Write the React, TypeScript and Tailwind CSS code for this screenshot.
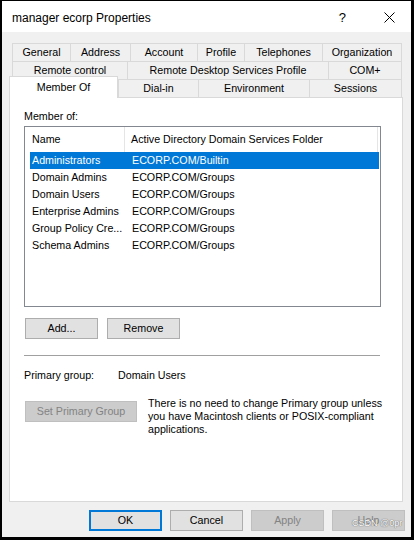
import React from "react";

const font = { fontFamily: '"Liberation Sans", Arial, sans-serif' };

const rowOne = [
  { label: "General", w: 58 },
  { label: "Address", w: 60 },
  { label: "Account", w: 67 },
  { label: "Profile", w: 47 },
  { label: "Telephones", w: 78 },
  { label: "Organization", w: 80 },
];
const rowTwo = [
  { label: "Remote control", w: 115 },
  { label: "Remote Desktop Services Profile", w: 201 },
  { label: "COM+", w: 74 },
];
const rowThree = [
  { label: "Dial-in", w: 80 },
  { label: "Environment", w: 111 },
  { label: "Sessions", w: 93 },
];

const groups = [
  ["Administrators", "ECORP.COM/Builtin"],
  ["Domain Admins", "ECORP.COM/Groups"],
  ["Domain Users", "ECORP.COM/Groups"],
  ["Enterprise Admins", "ECORP.COM/Groups"],
  ["Group Policy Cre...", "ECORP.COM/Groups"],
  ["Schema Admins", "ECORP.COM/Groups"],
];

function Tab({ label, w, last }: { label: string; w: number; last?: boolean }) {
  return (
    <div
      className={`h-[18px] shrink-0 flex items-center justify-center border-t border-l border-[#d9d9d9] bg-[#f0f0f0] ${last ? "border-r" : ""}`}
      style={{ width: w }}
    >
      {label}
    </div>
  );
}

function Btn({ children, disabled, focused, w = 73 }: { children: React.ReactNode; disabled?: boolean; focused?: boolean; w?: number }) {
  let cls = "bg-[#e1e1e1] border border-[#adadad] text-black";
  if (disabled) cls = "bg-[#cccccc] border border-[#bfbfbf] text-[#838383]";
  if (focused) cls = "bg-[#e1e1e1] border-2 border-[#0078d7] text-black";
  return (
    <div className={`h-[21px] shrink-0 flex items-center justify-center ${cls}`} style={{ width: w }}>
      {children}
    </div>
  );
}

export default function App() {
  return (
    <div className="w-[414px] h-[540px] bg-black overflow-hidden pt-px pl-[2px] pr-[3px] pb-[3px] text-[10.7px] text-black" style={font}>
      <div className="h-full flex flex-col bg-[#f0f0f0]">
        {/* title bar */}
        <div className="h-[31px] bg-white flex items-center shrink-0">
          <span className="ml-[10px] text-[12px] mt-[2px]">manager ecorp Properties</span>
          <span className="ml-auto text-[13px] mr-[38px] mt-[2px]">?</span>
          <svg width="11" height="11" viewBox="0 0 11 11" className="mr-[16px] mt-[2px]">
            <path d="M0.5 0.5 L10.5 10.5 M10.5 0.5 L0.5 10.5" stroke="#000" strokeWidth="1" />
          </svg>
        </div>

        {/* tabs */}
        <div className="pl-[7px] pr-[8px] pt-[11px] flex flex-col">
          <div className="flex pl-[3px]">
            {rowOne.map((t, i) => (
              <Tab key={t.label} {...t} last={i === rowOne.length - 1} />
            ))}
          </div>
          <div className="flex pl-[3px]">
            {rowTwo.map((t, i) => (
              <Tab key={t.label} {...t} last={i === rowTwo.length - 1} />
            ))}
          </div>
          <div className="flex items-end relative z-10 -mt-[3px] -mb-px">
            <div className="h-[22px] w-[109px] shrink-0 bg-white border border-b-0 border-[#d9d9d9] flex justify-center pt-[2px]">
              Member Of
            </div>
            {rowThree.map((t, i) => (
              <div key={t.label} className="border-b border-[#d9d9d9]">
                <Tab {...t} last={i === rowThree.length - 1} />
              </div>
            ))}
          </div>
        </div>

        {/* panel */}
        <div className="ml-[7px] mr-[8px] h-[405px] bg-white border border-[#d9d9d9] pl-[14px] pt-[10px] flex flex-col shrink-0">
          <div className="h-[16px] leading-[16px]">Member of:</div>
          <div className="mt-[2px] w-[357px] h-[181px] border border-[#828790] flex flex-col">
            <div className="h-[25px] flex shrink-0">
              <div className="w-[100px] pl-[7px] flex items-center border-r border-[#e5e5e5]">Name</div>
              <div className="w-[253px] pl-[6px] flex items-center border-r border-[#e5e5e5]">Active Directory Domain Services Folder</div>
            </div>
            <div className="flex flex-col">
              {groups.map(([n, f], i) => (
                <div
                  key={n}
                  className={`ml-[5px] w-[349px] h-[17px] flex items-center ${i === 0 ? "bg-[#0078d7] text-white" : ""}`}
                >
                  <span className="w-[100px] pl-[2px] whitespace-nowrap">{n}</span>
                  <span className="pl-[2px]">{f}</span>
                </div>
              ))}
            </div>
          </div>

          <div className="mt-[11px] flex gap-[9px] pl-px">
            <Btn>Add...</Btn>
            <Btn>Remove</Btn>
          </div>

          <div className="mt-[16px] w-[356px] h-px bg-[#a0a0a0]" />

          <div className="mt-[11px] h-[16px] flex items-center">
            <span className="w-[94px]">Primary group:</span>
            <span>Domain Users</span>
          </div>

          <div className="mt-[14px] flex items-start pl-px">
            <div className="mt-[4px]">
              <Btn disabled w={112}>Set Primary Group</Btn>
            </div>
            <p className="ml-[11px] leading-[13px] whitespace-nowrap">
              There is no need to change Primary group unless
              <br />
              you have Macintosh clients or POSIX-compliant
              <br />
              applications.
            </p>
          </div>
        </div>

        {/* dialog buttons */}
        <div className="pt-[8px] pr-[6px] flex justify-end gap-[8px]">
          <Btn focused>OK</Btn>
          <Btn>Cancel</Btn>
          <Btn disabled>Apply</Btn>
          <div className="relative">
            <Btn disabled>Help</Btn>
            <span
              className="absolute left-[20px] top-[9px] text-[9px] leading-[9px] text-white whitespace-nowrap"
              style={{ textShadow: "0 0 1px #666, 0 0 1px #666" }}
            >
              CSDN @0pr
            </span>
          </div>
        </div>
      </div>
    </div>
  );
}
